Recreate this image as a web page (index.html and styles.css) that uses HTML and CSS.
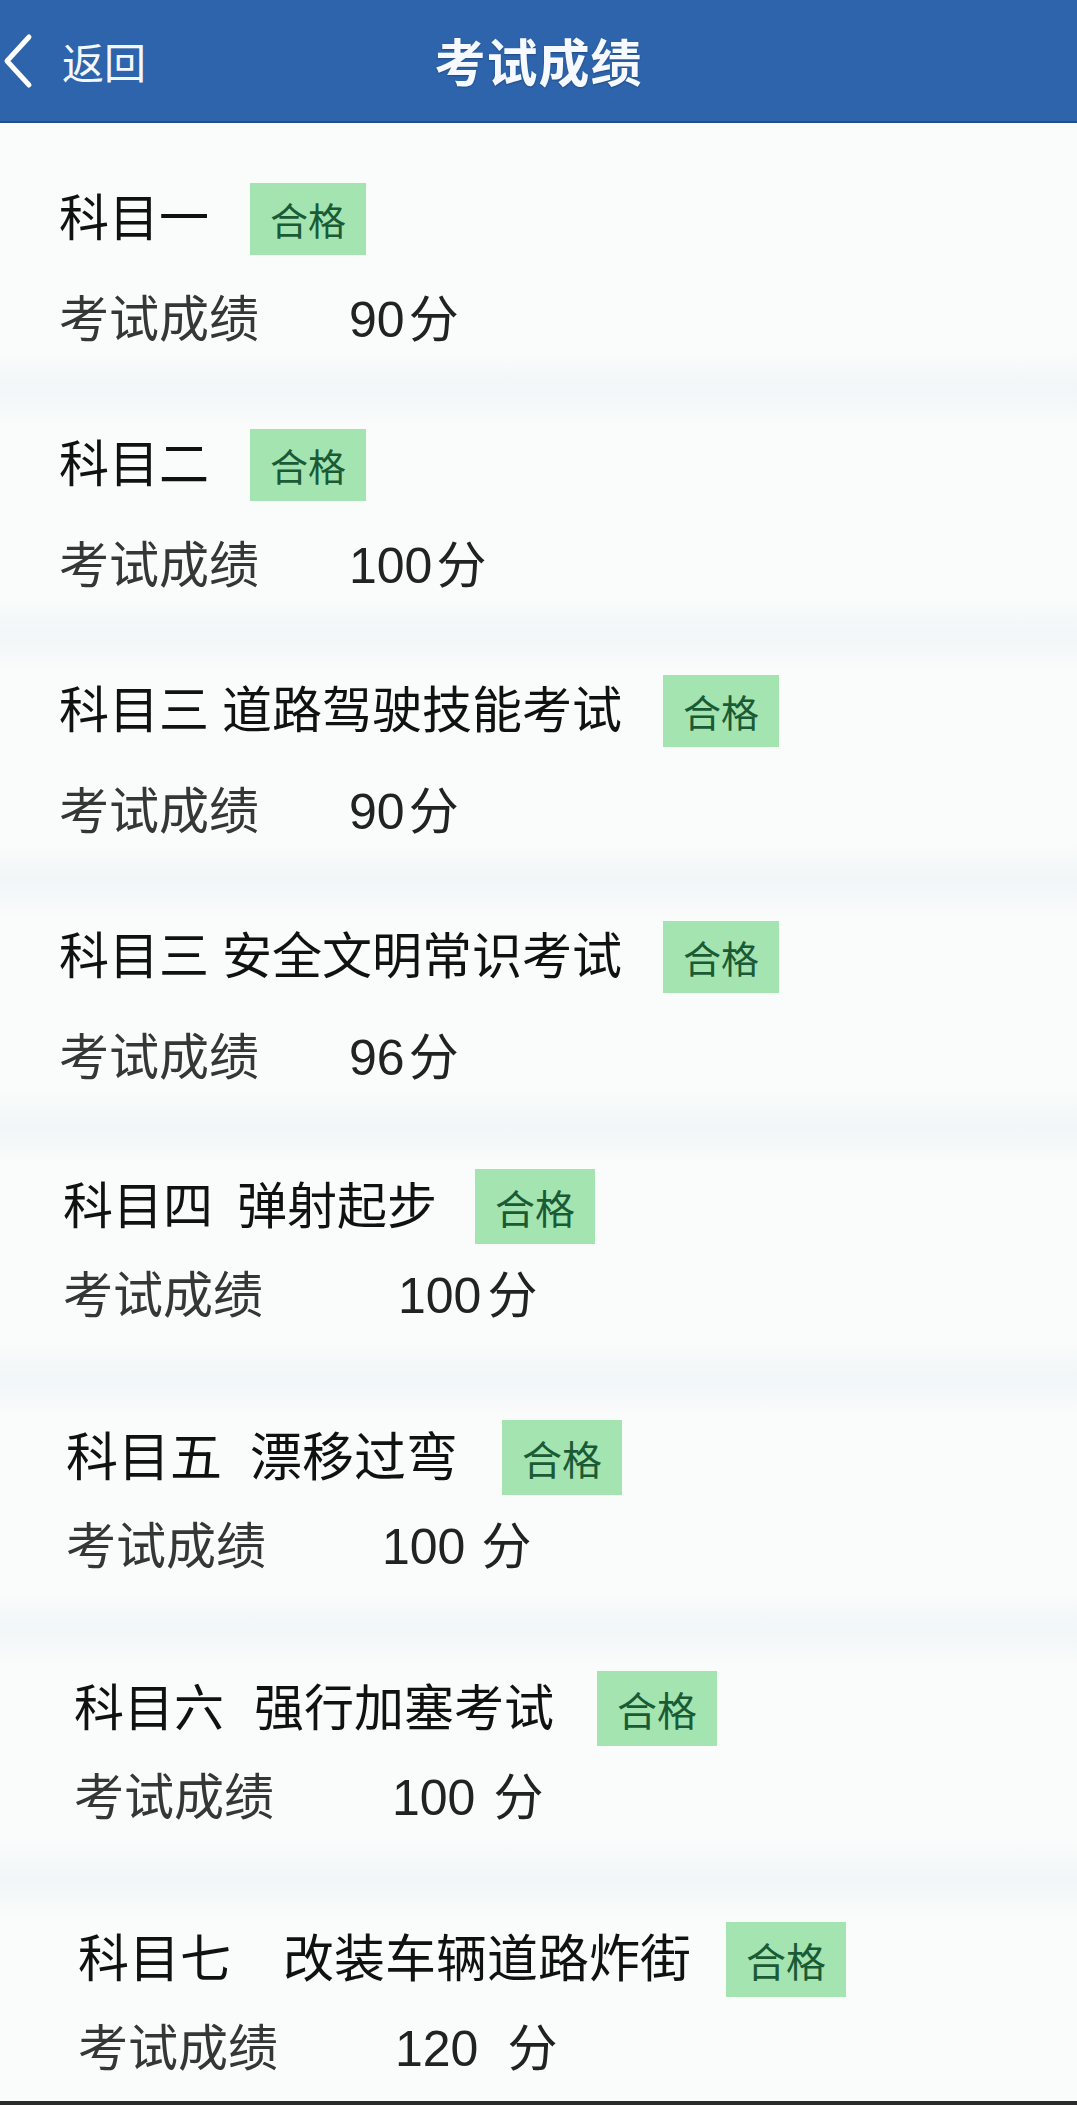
FILE: index.html
```html
<!DOCTYPE html>
<html lang="zh-CN">
<head>
<meta charset="utf-8">
<title>考试成绩</title>
<link rel="stylesheet" href="styles.css">
</head>
<body>
<div class="page">
  <header class="topbar">
    <div class="back">
      <svg class="back-icon" viewBox="0 0 32 56" width="32" height="56" aria-hidden="true">
        <polyline points="27,4 5,28 27,52" fill="none" stroke="#ffffff" stroke-width="5" stroke-linecap="round" stroke-linejoin="round"/>
      </svg>
      <span class="back-text">返回</span>
    </div>
    <h1 class="topbar-title">考试成绩</h1>
  </header>

  <main class="list">
    <section class="item">
      <div class="title-row"><span class="subject">科目一</span><span class="badge">合格</span></div>
      <div class="score-row"><span class="label">考试成绩</span><span class="value"><span class="num">90</span><span class="unit">分</span></span></div>
    </section>

    <section class="item">
      <div class="title-row"><span class="subject">科目二</span><span class="badge">合格</span></div>
      <div class="score-row"><span class="label">考试成绩</span><span class="value"><span class="num">100</span><span class="unit">分</span></span></div>
    </section>

    <section class="item">
      <div class="title-row"><span class="subject">科目三</span><span class="name">道路驾驶技能考试</span><span class="badge">合格</span></div>
      <div class="score-row"><span class="label">考试成绩</span><span class="value"><span class="num">90</span><span class="unit">分</span></span></div>
    </section>

    <section class="item">
      <div class="title-row"><span class="subject">科目三</span><span class="name">安全文明常识考试</span><span class="badge">合格</span></div>
      <div class="score-row"><span class="label">考试成绩</span><span class="value"><span class="num">96</span><span class="unit">分</span></span></div>
    </section>

    <section class="item item--lg item--s5">
      <div class="title-row"><span class="subject">科目四</span><span class="name">弹射起步</span><span class="badge">合格</span></div>
      <div class="score-row"><span class="label">考试成绩</span><span class="value"><span class="num">100</span><span class="unit">分</span></span></div>
    </section>

    <section class="item item--lg item--s6">
      <div class="title-row"><span class="subject">科目五</span><span class="name">漂移过弯</span><span class="badge">合格</span></div>
      <div class="score-row"><span class="label">考试成绩</span><span class="value"><span class="num">100</span><span class="unit">分</span></span></div>
    </section>

    <section class="item item--lg item--s7">
      <div class="title-row"><span class="subject">科目六</span><span class="name">强行加塞考试</span><span class="badge">合格</span></div>
      <div class="score-row"><span class="label">考试成绩</span><span class="value"><span class="num">100</span><span class="unit">分</span></span></div>
    </section>

    <section class="item item--lg item--s8">
      <div class="title-row"><span class="subject">科目七</span><span class="name">改装车辆道路炸街</span><span class="badge">合格</span></div>
      <div class="score-row"><span class="label">考试成绩</span><span class="value"><span class="num">120</span><span class="unit">分</span></span></div>
    </section>
  </main>
</div>
</body>
</html>
```

FILE: styles.css
```css
* {
  box-sizing: border-box;
}

html,
body {
  margin: 0;
  padding: 0;
  background: #fafbfb;
}

body {
  font-family: "Liberation Sans", "Noto Sans CJK SC", sans-serif;
  color: #141414;
}

.page {
  width: 1077px;
  border-bottom: 4px solid #2b2b2b;
  background: #fafbfb;
}

/* ---------- top bar ---------- */
.topbar {
  position: relative;
  height: 123px;
  background: #2d64ab;
  border-bottom: 2px solid #234f88;
  display: flex;
  align-items: center;
  justify-content: center;
}

.back {
  position: absolute;
  left: 2px;
  top: 33px;
  display: flex;
  align-items: center;
  gap: 28px;
  color: #ffffff;
}

.back-icon {
  display: block;
}

.back-text {
  font-family: "Noto Sans CJK SC", sans-serif;
  font-size: 42px;
  line-height: 1;
  color: #f4f8ff;
}

.topbar-title {
  margin: 0;
  font-family: "Noto Sans CJK SC", sans-serif;
  font-size: 51px;
  font-weight: 700;
  line-height: 1;
  color: #f6f9ff;
  letter-spacing: 1px;
  text-shadow: 0 1px 2px rgba(0, 0, 0, 0.25);
}

/* ---------- list ---------- */
.list {
  padding-top: 20px;
  display: flex;
  flex-direction: column;
}

.item {
  --indent: 59px;
  --label-w: 290px;
  --name-gap: 13px;
  --badge-gap: 41px;
  --unit-gap: 4px;
  --title-size: 50px;
  padding: 40px 0 40px var(--indent);
  font-size: 50px;
  background: linear-gradient(to bottom,
    #f1f6f8 0,
    #fafbfb 36px,
    #fafbfb calc(100% - 36px),
    #f1f6f8 100%);
}

.item:first-child {
  background: linear-gradient(to bottom,
    #fafbfb 0,
    #fafbfb calc(100% - 36px),
    #f1f6f8 100%);
}

.item:last-child {
  background: linear-gradient(to bottom,
    #f1f6f8 0,
    #fafbfb 36px,
    #fafbfb 100%);
}

.title-row {
  display: flex;
  align-items: center;
  height: 72px;
  font-size: var(--title-size);
}

.subject,
.name {
  line-height: 1;
  color: #111111;
  white-space: nowrap;
}

.name {
  margin-left: var(--name-gap);
}

.badge {
  margin-left: var(--badge-gap);
  width: 116px;
  height: 72px;
  display: flex;
  align-items: center;
  justify-content: center;
  background: #a4e4b1;
  color: #1a5a35;
  font-family: "Noto Sans CJK SC", sans-serif;
  font-size: 38px;
  line-height: 1;
}

.score-row {
  margin-top: 35px;
  display: flex;
  align-items: center;
  height: 59px;
}

.label {
  width: var(--label-w);
  flex: none;
  line-height: 1;
  color: #363636;
}

.value {
  display: flex;
  align-items: center;
  line-height: 1;
  color: #222222;
}

.unit {
  margin-left: var(--unit-gap);
}

/* larger, slightly skewed lower part of the photo */
.item--lg {
  padding-top: 42px;
  padding-bottom: 52px;
  font-size: 50px;
  --badge-gap: 38px;
}

.item--lg .title-row {
  height: 75px;
}

.item--lg .badge {
  width: 120px;
  height: 75px;
  font-size: 40px;
}

.item--lg .score-row {
  margin-top: 22px;
  height: 60px;
}

.item--s5 {
  --indent: 63px;
  --label-w: 335px;
  --name-gap: 24px;
  --unit-gap: 6px;
}

.item--s6 {
  --indent: 66px;
  --label-w: 316px;
  --name-gap: 28px;
  --unit-gap: 16px;
  --title-size: 52px;
  --badge-gap: 44px;
}

.item--s7 {
  --indent: 74px;
  --label-w: 318px;
  --name-gap: 30px;
  --unit-gap: 18px;
  --badge-gap: 43px;
}

.item--s8 {
  --indent: 78px;
  --label-w: 317px;
  --name-gap: 52px;
  --unit-gap: 29px;
  --title-size: 51px;
  --badge-gap: 35px;
  padding-bottom: 22px;
}
```
